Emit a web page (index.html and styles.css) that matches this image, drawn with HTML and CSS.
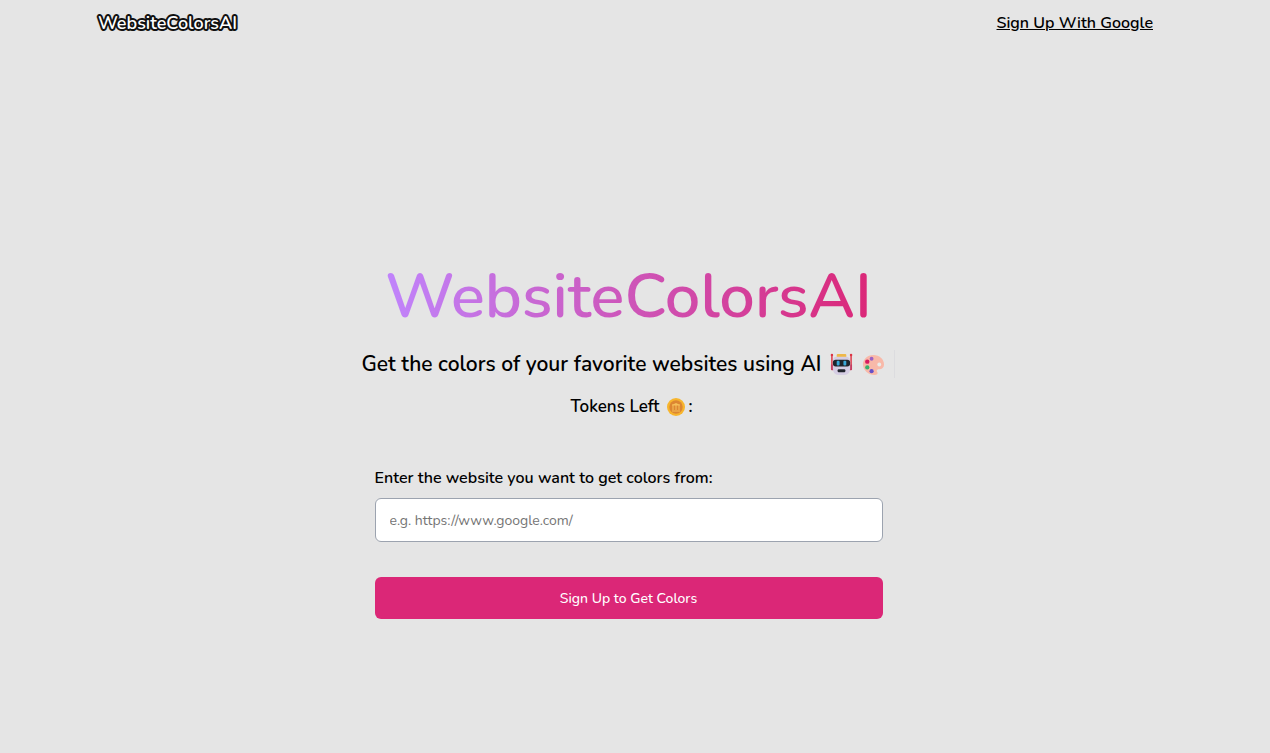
FILE: index.html
```
<!DOCTYPE html>
<html lang="en">
<head>
  <meta charset="UTF-8">
  <meta name="viewport" content="width=device-width, initial-scale=1.0">
  <title>WebsiteColorsAI</title>
  <link rel="stylesheet" href="styles.css">
</head>
<body>

  <nav class="navbar">
    <a class="logo" href="#">WebsiteColorsAI</a>
    <a class="signup-link" href="#">Sign Up With Google</a>
  </nav>

  <main class="hero">
    <h1 class="title">WebsiteColorsAI</h1>

    <h2 class="tagline">
      <span>Get the colors of your favorite websites using AI</span>
      <svg class="emoji" viewBox="0 0 24 24" role="img" aria-label="robot">
        <path d="M2 2v15M22 2v15" stroke="#dc3545" stroke-width="1.5" stroke-linecap="round"/>
        <circle cx="2" cy="2" r="1.3" fill="#dc3545"/>
        <circle cx="22" cy="2" r="1.3" fill="#dc3545"/>
        <path d="M1 12h3v6H2a1 1 0 0 1-1-1zM23 12h-3v6h2a1 1 0 0 0 1-1z" fill="#c63d60"/>
        <rect x="7" y="1" width="10" height="4" rx="1" fill="#eeb84a"/>
        <path d="M7 4h10q4 0 4 5v7q0 7-6 7H9q-6 0-6-7V9q0-5 4-5z" fill="#d5cde3"/>
        <rect x="3" y="7" width="18" height="7" rx="3" fill="#20242c"/>
        <rect x="7" y="8" width="3" height="5" rx="1" fill="#39a7d8"/>
        <rect x="14" y="8" width="3" height="5" rx="1" fill="#39a7d8"/>
        <rect x="8" y="17" width="8" height="3" rx="1" fill="#20242c"/>
      </svg>
      <svg class="emoji" viewBox="0 0 24 24" role="img" aria-label="palette">
        <path d="M12 2C5 2 1 7 1 12c0 6 6 11 12 11 3 0 4-2 3-3s-1-3 2-3c3 0 5-2 5-5 0-6-5-10-11-10z" fill="#f8b9a9"/>
        <circle cx="18" cy="12" r="2" fill="#e9eceb"/>
        <circle cx="10" cy="6" r="2" fill="#9b61c4"/>
        <circle cx="5.5" cy="9" r="2.3" fill="#d81b60"/>
        <circle cx="5.5" cy="15" r="2.2" fill="#38b16b"/>
        <circle cx="10" cy="19" r="2.2" fill="#6650c8"/>
      </svg>
      <span class="cursor"></span>
    </h2>

    <p class="tokens">
      Tokens Left
      <svg class="coin" viewBox="0 0 20 20" role="img" aria-label="coin">
        <circle cx="10" cy="10" r="9" fill="#f7b52d"/>
        <circle cx="10" cy="10" r="6.7" fill="#dc8632"/>
        <path d="M6 8l4-2 4 2z" fill="#f6c05b"/>
        <path d="M6 8h8M6 14h8M7 8v5M10 8v5M13 8v5" stroke="#f6c05b"/>
      </svg>:
    </p>

    <form class="color-form">
      <label for="website">Enter the website you want to get colors from:</label>
      <input type="text" id="website" placeholder="e.g. https://www.google.com/">
      <button type="button">Sign Up to Get Colors</button>
    </form>
  </main>

</body>
</html>
```
FILE: styles.css
```
* {
  box-sizing: border-box;
}
body {
  display: flex;
  flex-direction: column;
  min-height: 100vh;
  margin: 0;
  padding-right: 13px;
  background-color: #e5e5e5;
  color: #000;
  font-family: Nunito, Lato, sans-serif;
}
.navbar {
  display: flex;
  justify-content: space-between;
  align-items: center;
  height: 46px;
  padding: 0 104px 0 98px;
}
.logo {
  color: #fff;
  font-size: 18px;
  font-weight: 600;
  text-decoration: none;
  -webkit-text-stroke: 4px #111;
  paint-order: stroke fill;
}
.signup-link {
  color: #000;
  font-size: 16px;
  font-weight: 600;
}
.hero {
  display: flex;
  flex: 1;
  flex-direction: column;
  align-items: center;
  justify-content: center;
  padding-top: 72px;
}
.title {
  margin: 0;
  background: linear-gradient(to right, #c084fc, #db2777);
  background-clip: text;
  -webkit-background-clip: text;
  color: transparent;
  font-size: 63px;
  font-weight: 600;
  line-height: 88px;
}
.tagline {
  display: flex;
  align-items: center;
  gap: 9px;
  margin: 8px 0 0;
  font-size: 21px;
  font-weight: 600;
  line-height: 32px;
}
.emoji {
  width: 23px;
  height: 23px;
  fill: none;
}
.cursor {
  width: 1px;
  height: 28px;
  background-color: #dcdcdf;
}
.tokens {
  display: flex;
  align-items: center;
  margin: 15px 0 0;
  padding-left: 6px;
  font-size: 17px;
  font-weight: 600;
  line-height: 24px;
}
.coin {
  width: 20px;
  height: 20px;
  margin: 0 2px 0 7px;
  fill: none;
}
.color-form {
  display: flex;
  flex-direction: column;
  width: 508px;
  max-width: 100%;
  margin-top: 47px;
}
label {
  font-size: 16px;
  font-weight: 600;
  line-height: 24px;
}
input {
  height: 44px;
  margin-top: 8px;
  padding: 0 14px;
  border: 1px solid #9ca3af;
  border-radius: 6px;
  background-color: #fff;
  font-family: inherit;
  font-size: 14px;
}
input::placeholder {
  color: #757575;
}
button {
  height: 42px;
  margin-top: 35px;
  border: none;
  border-radius: 6px;
  background-color: #db2777;
  color: #fff;
  font-family: inherit;
  font-size: 14px;
  font-weight: 500;
  cursor: pointer;
}
```
